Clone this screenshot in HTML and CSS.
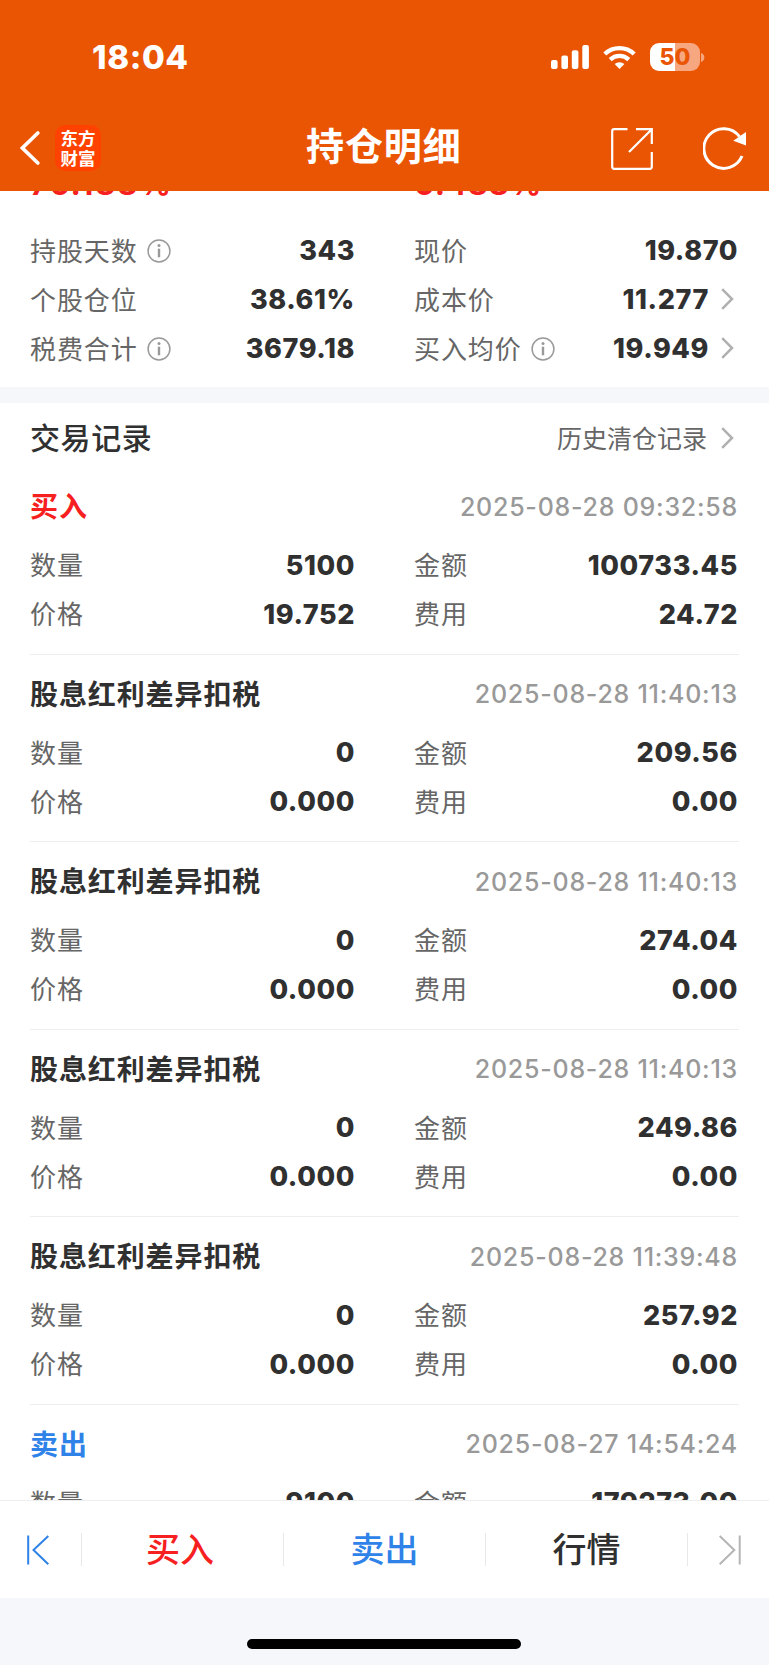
FILE: index.html
```
<!DOCTYPE html>
<html lang="zh-CN">
<head>
    <meta charset="UTF-8">
    <meta name="viewport" content="width=device-width, initial-scale=1.0">
    <title>持仓明细</title>
    <link rel="stylesheet" href="styles.css">
</head>
<body>
    <!-- shared icons -->
    <svg class="defs" width="0" height="0">
        <symbol id="info" viewBox="0 0 24 24">
            <circle cx="12" cy="12" r="10.9" fill="none" stroke="#999" stroke-width="1.5"/>
            <circle cx="12" cy="6.4" r="1.5" fill="#999"/>
            <path d="M12 9.7v8.6" stroke="#999" stroke-width="2.4"/>
        </symbol>
        <symbol id="arrow" viewBox="0 0 13 22">
            <path d="M1.2 1.2L11 11L1.2 20.8" fill="none" stroke="#b0b0b0" stroke-width="2.5"/>
        </symbol>
    </svg>

    <header class="header">
        <div class="status-bar">
            <span class="clock">18:04</span>
            <div class="status-icons">
                <svg width="38" height="24" viewBox="0 0 38 24" fill="#fff">
                    <rect x="0" y="15" width="6.6" height="9" rx="2"/>
                    <rect x="10.4" y="10.4" width="6.6" height="13.6" rx="2"/>
                    <rect x="20.8" y="5.2" width="6.6" height="18.8" rx="2"/>
                    <rect x="31.3" y="0" width="6.6" height="24" rx="2"/>
                </svg>
                <svg class="wifi" width="33" height="24" viewBox="0 0 33 24">
                    <path d="M1.8 9A21.4 21.4 0 0 1 31.2 9" fill="none" stroke="#fff" stroke-width="4.4"/>
                    <path d="M7.2 14.6A13.6 13.6 0 0 1 25.8 14.6" fill="none" stroke="#fff" stroke-width="4.2"/>
                    <path d="M16.5 24L11.6 19.1A7.2 7.2 0 0 1 21.4 19.1Z" fill="#fff"/>
                </svg>
                <div class="battery"><span>50</span></div>
                <svg class="battery-cap" width="4" height="9" viewBox="0 0 4 9"><path d="M0 0A4.7 4.7 0 0 1 0 9Z" fill="#f6a780"/></svg>
            </div>
        </div>
        <div class="nav">
            <svg class="back" width="20" height="34" viewBox="0 0 20 34">
                <path d="M17.8 2L2.4 17L17.8 32" fill="none" stroke="#fff" stroke-width="3.6" stroke-linecap="round"/>
            </svg>
            <div class="logo"><span>东方</span><span>财富</span></div>
            <h1>持仓明细</h1>
            <svg class="share" width="42" height="42" viewBox="0 0 42 42" fill="none" stroke="#fff" stroke-width="2.2">
                <path d="M16.5 1.2H3.2Q1.2 1.2 1.2 3.2V38.8Q1.2 40.8 3.2 40.8H38.8Q40.8 40.8 40.8 38.8V24"/>
                <path d="M25 1.2H40.8V16M40.8 1.2L18 24"/>
            </svg>
            <svg class="refresh" width="44" height="43" viewBox="0 0 44 43">
                <path d="M39 29A19.8 19.8 0 1 1 36.5 9.6" fill="none" stroke="#fff" stroke-width="3"/>
                <path d="M43 5V18.4L30.3 13.8Z" fill="#fff"/>
            </svg>
        </div>
    </header>

    <main class="content">
        <section class="summary">
            <div class="grid rates">
                <span class="rate-total">76.188%</span>
                <span class="rate-day">0.488%</span>
            </div>
            <div class="grid">
                <div class="row"><span class="label">持股天数</span><svg class="info"><use href="#info"/></svg><b>343</b></div>
                <div class="row"><span class="label">现价</span><b>19.870</b></div>
                <div class="row"><span class="label">个股仓位</span><b>38.61%</b></div>
                <div class="row"><span class="label">成本价</span><b>11.277</b><svg class="arrow"><use href="#arrow"/></svg></div>
                <div class="row"><span class="label">税费合计</span><svg class="info"><use href="#info"/></svg><b>3679.18</b></div>
                <div class="row"><span class="label">买入均价</span><svg class="info"><use href="#info"/></svg><b>19.949</b><svg class="arrow"><use href="#arrow"/></svg></div>
            </div>
        </section>

        <section class="records">
            <div class="records-head">
                <h2>交易记录</h2>
                <span class="history">历史清仓记录</span>
                <svg class="arrow"><use href="#arrow"/></svg>
            </div>

            <article class="record">
                <div class="record-head"><h3 class="buy">买入</h3><time>2025-08-28 09:32:58</time></div>
                <div class="grid">
                    <div class="row"><span class="label">数量</span><b>5100</b></div>
                    <div class="row"><span class="label">金额</span><b>100733.45</b></div>
                    <div class="row"><span class="label">价格</span><b>19.752</b></div>
                    <div class="row"><span class="label">费用</span><b>24.72</b></div>
                </div>
            </article>

            <article class="record">
                <div class="record-head"><h3>股息红利差异扣税</h3><time>2025-08-28 11:40:13</time></div>
                <div class="grid">
                    <div class="row"><span class="label">数量</span><b>0</b></div>
                    <div class="row"><span class="label">金额</span><b>209.56</b></div>
                    <div class="row"><span class="label">价格</span><b>0.000</b></div>
                    <div class="row"><span class="label">费用</span><b>0.00</b></div>
                </div>
            </article>

            <article class="record">
                <div class="record-head"><h3>股息红利差异扣税</h3><time>2025-08-28 11:40:13</time></div>
                <div class="grid">
                    <div class="row"><span class="label">数量</span><b>0</b></div>
                    <div class="row"><span class="label">金额</span><b>274.04</b></div>
                    <div class="row"><span class="label">价格</span><b>0.000</b></div>
                    <div class="row"><span class="label">费用</span><b>0.00</b></div>
                </div>
            </article>

            <article class="record">
                <div class="record-head"><h3>股息红利差异扣税</h3><time>2025-08-28 11:40:13</time></div>
                <div class="grid">
                    <div class="row"><span class="label">数量</span><b>0</b></div>
                    <div class="row"><span class="label">金额</span><b>249.86</b></div>
                    <div class="row"><span class="label">价格</span><b>0.000</b></div>
                    <div class="row"><span class="label">费用</span><b>0.00</b></div>
                </div>
            </article>

            <article class="record">
                <div class="record-head"><h3>股息红利差异扣税</h3><time>2025-08-28 11:39:48</time></div>
                <div class="grid">
                    <div class="row"><span class="label">数量</span><b>0</b></div>
                    <div class="row"><span class="label">金额</span><b>257.92</b></div>
                    <div class="row"><span class="label">价格</span><b>0.000</b></div>
                    <div class="row"><span class="label">费用</span><b>0.00</b></div>
                </div>
            </article>

            <article class="record">
                <div class="record-head"><h3 class="sell">卖出</h3><time>2025-08-27 14:54:24</time></div>
                <div class="grid">
                    <div class="row"><span class="label">数量</span><b>9100</b></div>
                    <div class="row"><span class="label">金额</span><b>179273.00</b></div>
                </div>
            </article>
        </section>
    </main>

    <footer class="footer">
        <nav class="tabs">
            <a class="edge first"><svg width="22" height="30" viewBox="0 0 22 30" fill="none" stroke="#2e82e8" stroke-width="2"><path d="M1.2 .5V29.5M21.3 1L6.5 15L21.3 29.2"/></svg></a>
            <a class="tab buy">买入</a>
            <a class="tab sell">卖出</a>
            <a class="tab">行情</a>
            <a class="edge last"><svg width="22" height="30" viewBox="0 0 22 30" fill="none" stroke="#b5b5b5" stroke-width="2"><path d="M20.7 .5V29.5M.7 1L15.3 15L.7 29.2"/></svg></a>
        </nav>
        <div class="home-indicator"></div>
    </footer>
</body>
</html>
```
FILE: styles.css
```
:root {
    --orange: #ea5504;
    --red: #f72020;
    --blue: #2e82e8;
    --dark: #303030;
    --gray: #666;
    --bg: #f6f7fa;
}
* {
    box-sizing: border-box;
}
body {
    margin: 0;
    height: 1665px;
    display: flex;
    flex-direction: column;
    overflow: hidden;
    font-family: Inter, "Noto Sans CJK SC", sans-serif;
    color: var(--dark);
    background: #fff;
}
svg {
    display: block;
    flex: none;
}
.defs {
    position: absolute;
}
h1, h2, h3 {
    margin: 0;
    font-family: "Noto Sans CJK SC", sans-serif;
}

/* Header */
.header {
    flex: none;
    height: 191px;
    background: var(--orange);
    color: #fff;
}
.status-bar {
    height: 105px;
    padding: 9px 64px 0 92px;
    display: flex;
    align-items: center;
    justify-content: space-between;
}
.clock {
    font-size: 33px;
    font-weight: 800;
    letter-spacing: 0.6px;
}
.status-icons {
    display: flex;
    align-items: center;
}
.wifi {
    margin: 0 14px;
}
.battery {
    width: 50px;
    height: 28px;
    border-radius: 9px;
    background: linear-gradient(90deg, #fff 50%, #f6a780 50%);
    color: var(--orange);
    font-size: 23px;
    font-weight: 800;
    line-height: 28px;
    text-align: center;
}
.battery-cap {
    margin-left: 1px;
}
.nav {
    height: 86px;
    padding: 0 22px 0 20px;
    display: flex;
    align-items: center;
}
.logo {
    width: 46px;
    height: 46px;
    margin-left: 15px;
    padding-top: 3px;
    border-radius: 10px;
    background: #ff4200;
    display: flex;
    flex-direction: column;
    align-items: center;
    font: 700 17.5px/19.5px "Noto Sans CJK SC", sans-serif;
}
.nav h1 {
    flex: 1;
    margin: 0 0 8px 205px;
    font-size: 38px;
    line-height: 54px;
    letter-spacing: 0.9px;
}
.share {
    margin-top: 1px;
}
.refresh {
    margin: 1px 0 0 50px;
}

/* Scrolled content */
.content {
    height: 1309px;
    overflow: hidden;
}
.grid {
    display: grid;
    grid-template-columns: 325px 324px;
    column-gap: 59px;
}
.summary {
    height: 212px;
    padding: 0 30px;
    border-bottom: 16px solid var(--bg);
}
.rates {
    height: 35px;
    color: var(--red);
    font-size: 31px;
    font-weight: 700;
    line-height: 34px;
}
.rates span {
    height: 34px;
    margin-top: -24px;
}
.rate-total {
    letter-spacing: 1.9px;
}
.rate-day {
    letter-spacing: 0.8px;
}
.row {
    height: 49px;
    display: flex;
    align-items: center;
}
.label {
    padding-bottom: 3px;
    color: var(--gray);
    font-family: "Noto Sans CJK SC", sans-serif;
    font-size: 26px;
    letter-spacing: 0.9px;
}
.row b {
    margin-left: auto;
    font-size: 27px;
    font-weight: 800;
    letter-spacing: 0.6px;
}
.info {
    width: 24px;
    height: 24px;
    margin-left: 9px;
}
.arrow {
    width: 13px;
    height: 22px;
    margin: 0 4px 2px 12px;
}
.records {
    padding: 0 30px;
}
.records-head {
    height: 64px;
    padding: 7px 1px 0 0;
    display: flex;
    align-items: center;
}
.records-head h2 {
    margin-right: auto;
    padding-bottom: 5px;
    font-size: 30px;
    font-weight: 500;
    letter-spacing: 0.6px;
}
.history {
    padding: 0 2px 4px 0;
    color: var(--gray);
    font-size: 25px;
}
.record {
    width: 709px;
    height: 187.5px;
    border-bottom: 1px solid #eee;
}
.record-head {
    height: 73.5px;
    padding: 6px 1px 0 0;
    display: flex;
    align-items: center;
    justify-content: space-between;
}
.record-head h3 {
    padding-bottom: 3px;
    font-size: 28px;
    letter-spacing: 0.9px;
}
.record-head time {
    color: #999;
    font-size: 25px;
    font-weight: 500;
    letter-spacing: 0.75px;
}
.buy {
    color: var(--red);
}
.sell {
    color: var(--blue);
}

/* Bottom bar */
.footer {
    flex: 1;
    background: var(--bg);
}
.tabs {
    height: 98px;
    border-top: 1px solid #eee;
    background: #fff;
    display: flex;
    align-items: center;
}
.edge {
    width: 81px;
}
.first {
    padding-left: 27px;
}
.last {
    padding-left: 31px;
}
.tab {
    flex: 1;
    height: 33px;
    border-left: 1px solid #e8e8e8;
    font: 500 34px/30px "Noto Sans CJK SC", sans-serif;
    text-align: center;
}
.tab.buy {
    text-indent: -5px;
}
.tab:nth-child(4) {
    border-right: 1px solid #e8e8e8;
}
.home-indicator {
    width: 274px;
    height: 10px;
    margin: 41px 0 0 247px;
    border-radius: 5px;
    background: #000;
}
```
